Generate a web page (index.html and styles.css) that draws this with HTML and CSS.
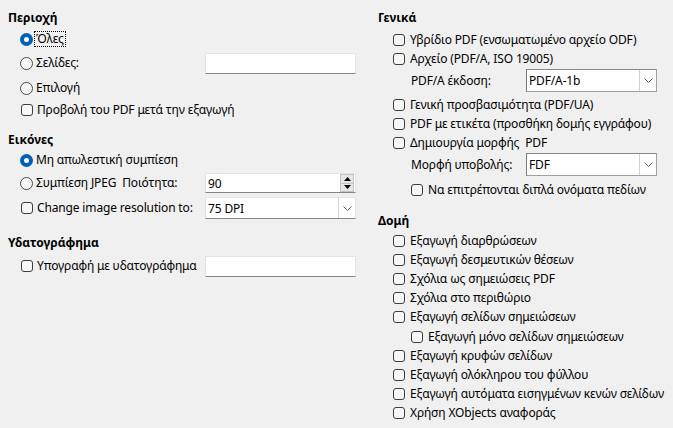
FILE: index.html
```html
<!DOCTYPE html>
<html lang="el">
<head>
<meta charset="utf-8">
<title>PDF</title>
<link rel="stylesheet" href="styles.css">
</head>
<body>
<div class="dialog">
  <div class="col col-left">
    <div class="heading">Περιοχή</div>
    <div class="lrow mt1">
      <div class="opt"><span class="radio checked"></span><span class="label focus">Όλες</span></div>
    </div>
    <div class="lrow mt2">
      <div class="opt"><span class="radio"></span><span class="label">Σελίδες:</span></div>
      <div class="field"></div>
    </div>
    <div class="lrow mt3">
      <div class="opt"><span class="radio"></span><span class="label">Επιλογή</span></div>
    </div>
    <div class="lrow">
      <div class="opt"><span class="check"></span><span class="label">Προβολή του PDF μετά την εξαγωγή</span></div>
    </div>

    <div class="heading mt8">Εικόνες</div>
    <div class="lrow">
      <div class="opt"><span class="radio checked"></span><span class="label">Μη απωλεστική συμπίεση</span></div>
    </div>
    <div class="lrow mt1">
      <div class="opt"><span class="radio"></span><span class="label">Συμπίεση JPEG&nbsp; Ποιότητα:</span></div>
      <div class="field spin">
        <span class="value">90</span>
        <span class="spin-btns">
          <span class="spin-btn"><svg width="7" height="4" viewBox="0 0 7 4"><path d="M0 4 L3.5 0 L7 4 Z" fill="#000"/></svg></span>
          <span class="spin-btn"><svg width="7" height="4" viewBox="0 0 7 4"><path d="M0 0 L3.5 4 L7 0 Z" fill="#000"/></svg></span>
        </span>
      </div>
    </div>
    <div class="lrow mt3">
      <div class="opt"><span class="check"></span><span class="label">Change image resolution to:</span></div>
      <div class="field combo">
        <span class="value">75 DPI</span>
        <span class="combo-btn"><svg width="9" height="5" viewBox="0 0 9 5"><path d="M0.5 0.5 L4.5 4.5 L8.5 0.5" fill="none" stroke="#606060" stroke-width="1"/></svg></span>
      </div>
    </div>

    <div class="heading mt13">Υδατογράφημα</div>
    <div class="lrow mt3">
      <div class="opt"><span class="check"></span><span class="label">Υπογραφή με υδατογράφημα</span></div>
      <div class="field"></div>
    </div>
  </div>

  <div class="col col-right">
    <div class="heading">Γενικά</div>
    <div class="rrow mt3"><span class="check"></span><span class="label">Υβρίδιο PDF (ενσωματωμένο αρχείο ODF)</span></div>
    <div class="rrow"><span class="check"></span><span class="label">Αρχείο (PDF/A, ISO 19005)</span></div>
    <div class="crow">
      <span class="sublabel">PDF/A έκδοση:</span>
      <div class="box-combo">
        <span class="value">PDF/A-1b</span>
        <span class="combo-btn"><svg width="9" height="5" viewBox="0 0 9 5"><path d="M0.5 0.5 L4.5 4.5 L8.5 0.5" fill="none" stroke="#606060" stroke-width="1"/></svg></span>
      </div>
    </div>
    <div class="rrow mt3"><span class="check"></span><span class="label">Γενική προσβασιμότητα (PDF/UA)</span></div>
    <div class="rrow"><span class="check"></span><span class="label">PDF με ετικέτα (προσθήκη δομής εγγράφου)</span></div>
    <div class="rrow"><span class="check"></span><span class="label">Δημιουργία μορφής&nbsp; PDF</span></div>
    <div class="crow">
      <span class="sublabel">Μορφή υποβολής:</span>
      <div class="box-combo">
        <span class="value">FDF</span>
        <span class="combo-btn"><svg width="9" height="5" viewBox="0 0 9 5"><path d="M0.5 0.5 L4.5 4.5 L8.5 0.5" fill="none" stroke="#606060" stroke-width="1"/></svg></span>
      </div>
    </div>
    <div class="rrow sub mt4"><span class="check"></span><span class="label">Να επιτρέπονται διπλά ονόματα πεδίων</span></div>

    <div class="heading mt11">Δομή</div>
    <div class="list mt1">
      <div class="rrow item"><span class="check"></span><span class="label">Εξαγωγή διαρθρώσεων</span></div>
      <div class="rrow item"><span class="check"></span><span class="label">Εξαγωγή δεσμευτικών θέσεων</span></div>
      <div class="rrow item"><span class="check"></span><span class="label">Σχόλια ως σημειώσεις PDF</span></div>
      <div class="rrow item"><span class="check"></span><span class="label">Σχόλια στο περιθώριο</span></div>
      <div class="rrow item"><span class="check"></span><span class="label">Εξαγωγή σελίδων σημειώσεων</span></div>
      <div class="rrow item sub"><span class="check"></span><span class="label">Εξαγωγή μόνο σελίδων σημειώσεων</span></div>
      <div class="rrow item"><span class="check"></span><span class="label">Εξαγωγή κρυφών σελίδων</span></div>
      <div class="rrow item"><span class="check"></span><span class="label">Εξαγωγή ολόκληρου του φύλλου</span></div>
      <div class="rrow item"><span class="check"></span><span class="label">Εξαγωγή αυτόματα εισηγμένων κενών σελίδων</span></div>
      <div class="rrow item"><span class="check"></span><span class="label">Χρήση XObjects αναφοράς</span></div>
    </div>
  </div>
</div>
</body>
</html>
```

FILE: styles.css
```css
html, body {
  margin: 0;
  padding: 0;
  background: #f0f0f0;
}

body {
  width: 673px;
  height: 428px;
  overflow: hidden;
  font-family: "Noto Sans", "Open Sans", sans-serif;
  font-size: 12px;
  letter-spacing: -0.15px;
  color: #000;
}

.dialog {
  display: grid;
  grid-template-columns: 370px 303px;
}

.col {
  padding: 7px 0 0 8px;
  display: flex;
  flex-direction: column;
}

.heading {
  height: 20px;
  display: flex;
  align-items: center;
  font-weight: 700;
  letter-spacing: 0;
}

.label {
  white-space: nowrap;
  line-height: 14px;
}

.focus {
  outline: 1px dotted #000;
  outline-offset: 0;
  padding: 0 1px;
  margin-left: -1px;
}

/* spacing modifiers */
.mt1 { margin-top: 1px; }
.mt2 { margin-top: 2px; }
.mt3 { margin-top: 3px; }
.mt4 { margin-top: 4px; }
.mt8 { margin-top: 8px; }
.mt11 { margin-top: 11px; }
.mt13 { margin-top: 13px; }

/* controls */
.radio {
  box-sizing: border-box;
  width: 13px;
  height: 13px;
  border-radius: 50%;
  border: 1px solid #4a4a4a;
  background: #f7f7f7;
  flex: none;
  position: relative;
}

.radio.checked {
  border: none;
  background: #005fb8;
}

.radio.checked::after {
  content: "";
  position: absolute;
  left: 4px;
  top: 4px;
  width: 5px;
  height: 5px;
  border-radius: 50%;
  background: #fff;
}

.check {
  box-sizing: border-box;
  width: 12px;
  height: 12px;
  border: 1px solid #3c3c3c;
  border-radius: 3px;
  background: #f7f7f7;
  flex: none;
}

/* left column rows */
.lrow {
  display: grid;
  grid-template-columns: 197px 151px;
  align-items: center;
  height: 22px;
}

.opt {
  display: flex;
  align-items: center;
  gap: 3px;
  padding-left: 12px;
}

.opt .check {
  margin-left: 1px;
  margin-right: 1px;
}

.field {
  box-sizing: border-box;
  height: 21px;
  background: #fff;
  border: 1px solid #e4e4e4;
  border-bottom-color: #868686;
  display: flex;
  align-items: center;
}

.field .value {
  flex: 1;
  padding-left: 2px;
}

.spin {
  height: 20px;
}

.spin-btns {
  display: flex;
  flex-direction: column;
  width: 14px;
  height: 18px;
  margin-right: 1px;
}

.spin-btn {
  flex: 1;
  display: flex;
  align-items: center;
  justify-content: center;
  background: #e6e6e6;
  border: 1px solid #c4c4c4;
}

.spin-btn + .spin-btn {
  border-top: none;
}

.combo {
  height: 22px;
}

.combo-btn {
  width: 16px;
  align-self: stretch;
  display: flex;
  align-items: center;
  justify-content: center;
  border-left: 1px solid #d2d2d2;
  background: #fff;
}

/* right column rows */
.rrow {
  display: flex;
  align-items: center;
  gap: 5px;
  height: 19px;
  padding-left: 15px;
}

.rrow.sub {
  padding-left: 33px;
}

.item {
  height: 19.2px;
}

.list {
  display: flex;
  flex-direction: column;
}

.crow {
  display: grid;
  grid-template-columns: 148px 131px;
  align-items: center;
  height: 24px;
}

.sublabel {
  padding-left: 33px;
  white-space: nowrap;
}

.box-combo {
  box-sizing: border-box;
  height: 23px;
  background: #fff;
  border: 1px solid #a0a0a0;
  border-left-color: #7a7a7a;
  border-top-color: #8a8a8a;
  display: flex;
  align-items: center;
}

.box-combo .value {
  flex: 1;
  padding-left: 2px;
}

.box-combo .combo-btn {
  width: 16px;
}
```
